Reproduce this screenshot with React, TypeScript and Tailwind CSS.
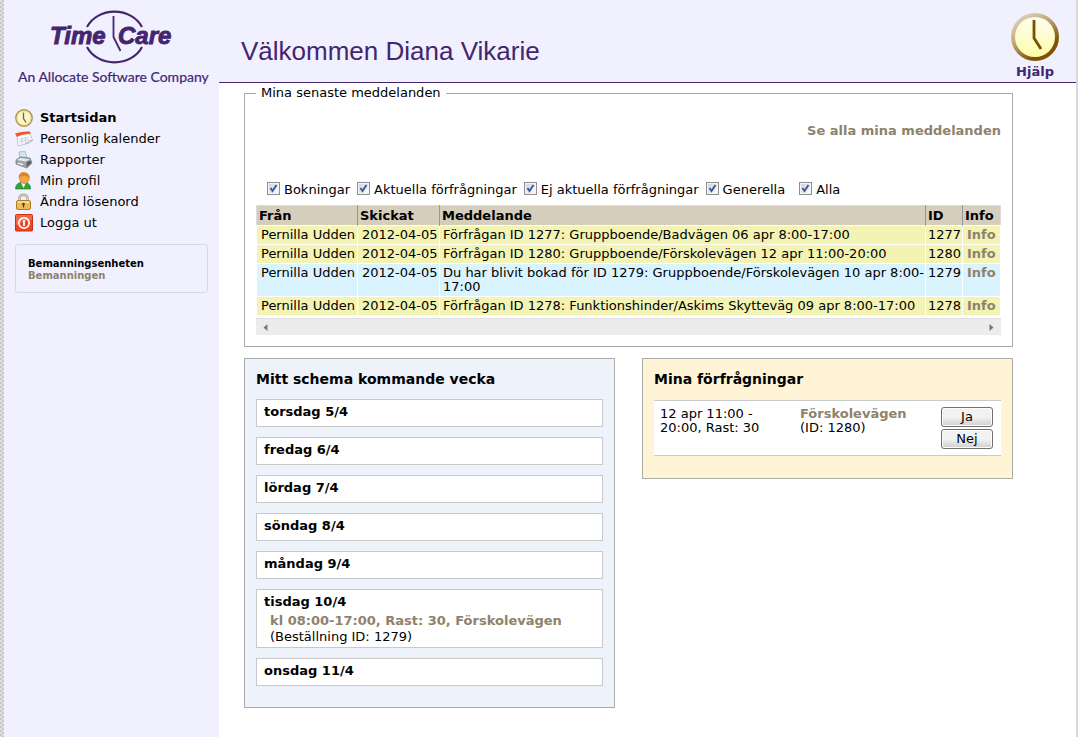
import React from 'react';

const filters = [
  { label: 'Bokningar', space: 'mr-[7px]' },
  { label: 'Aktuella förfrågningar', space: 'mr-[7px]' },
  { label: 'Ej aktuella förfrågningar', space: 'mr-[7px]' },
  { label: 'Generella', space: 'mr-[14px]' },
  { label: 'Alla', space: '' }
];

const messages = [
  { from: 'Pernilla Udden', sent: '2012-04-05', text: 'Förfrågan ID 1277: Gruppboende/Badvägen 06 apr 8:00-17:00', id: 1277, booked: false },
  { from: 'Pernilla Udden', sent: '2012-04-05', text: 'Förfrågan ID 1280: Gruppboende/Förskolevägen 12 apr 11:00-20:00', id: 1280, booked: false },
  { from: 'Pernilla Udden', sent: '2012-04-05', text: 'Du har blivit bokad för ID 1279: Gruppboende/Förskolevägen 10 apr 8:00-17:00', id: 1279, booked: true },
  { from: 'Pernilla Udden', sent: '2012-04-05', text: 'Förfrågan ID 1278: Funktionshinder/Askims Skytteväg 09 apr 8:00-17:00', id: 1278, booked: false }
];

const days = [
  { name: 'torsdag 5/4' },
  { name: 'fredag 6/4' },
  { name: 'lördag 7/4' },
  { name: 'söndag 8/4' },
  { name: 'måndag 9/4' },
  { name: 'tisdag 10/4', shift: 'kl 08:00-17:00, Rast: 30, Förskolevägen', order: '(Beställning ID: 1279)' },
  { name: 'onsdag 11/4' }
];

function Logo() {
  return (
    <svg viewBox="0 0 200 80" className="block h-20 w-[200px]" role="img" aria-label="TimeCare">
      <g fill="none" stroke="#432570">
        <path d="M72 18A30 25.500 0 0 1 127 18" strokeWidth="2.200" />
        <path d="M72 38A30 25.500 0 0 0 127 38" strokeWidth="2.200" />
        <path d="M98.500 7V28L105.500 42" strokeWidth="1.800" />
      </g>
      <g fill="#432570" fontFamily="'Liberation Sans', Arial, sans-serif" fontSize="24" fontWeight="bold" fontStyle="italic" stroke="#432570" strokeWidth="0.900">
        <text x="35" y="35">Time</text>
        <text x="103" y="35">Care</text>
      </g>
      <text x="3" y="73" fill="#432570" stroke="#432570" strokeWidth="0.200" fontFamily="Lato, sans-serif" fontSize="14">An Allocate Software Company</text>
    </svg>
  );
}

function ClockIcon({ className }: { className: string }) {
  return (
    <svg viewBox="0 0 48 48" className={className} aria-hidden="true">
      <defs>
        <linearGradient id="rim" x1="0.100" y1="0" x2="0.800" y2="1">
          <stop offset="0" stopColor="#e6dcc8" />
          <stop offset="0.400" stopColor="#c2a97a" />
          <stop offset="0.800" stopColor="#7d5200" />
        </linearGradient>
        <linearGradient id="face" x1="0" y1="0" x2="0" y2="1">
          <stop offset="0" stopColor="#fffdf0" />
          <stop offset="1" stopColor="#fdfdaa" />
        </linearGradient>
      </defs>
      <circle cx="24" cy="24" r="24" fill="url(#rim)" />
      <circle cx="24" cy="24" r="20" fill="url(#face)" />
      <path d="M23 7V25L30 36" fill="none" stroke="#7a5000" strokeWidth="2.800" />
    </svg>
  );
}

function SmallClockIcon() {
  return (
    <svg viewBox="0 0 18 18" className="size-[18px]" aria-hidden="true">
      <circle cx="9" cy="9" r="8.200" fill="#fdf6cc" stroke="#ab9440" strokeWidth="1.400" />
      <circle cx="9" cy="9" r="6.800" fill="none" stroke="#eee0a0" />
      <path d="M8.500 3.500V9.500L11 13.500" fill="none" stroke="#7b651c" strokeWidth="1.300" />
    </svg>
  );
}

function CalendarIcon() {
  return (
    <svg viewBox="0 0 18 18" className="size-[18px]" aria-hidden="true">
      <path d="M2 5L14.500 3L17.500 10Q13 14 3 16Z" fill="#fbfcff" stroke="#aab2c5" strokeWidth="0.700" />
      <path d="M0 3.500Q7 1 15 1.500L15.500 4Q7 4 2 7Z" fill="#f1592a" />
      <path d="M4 9.500L14 7M4 12L14 9.500M7 8V14M10.500 7V13" stroke="#b9c0d1" strokeWidth="0.700" />
      <path d="M17.500 10Q13 10.500 10.500 14Q15 13.500 17.500 10Z" fill="#d6dbe6" stroke="#8d96aa" strokeWidth="0.500" />
    </svg>
  );
}

function PrinterIcon() {
  return (
    <svg viewBox="0 0 18 18" className="size-[18px]" aria-hidden="true">
      <path d="M4 1L10 0L12 7L5 8Z" fill="#cfe2fa" stroke="#99aabf" strokeWidth="0.700" />
      <path d="M1 9L5 6L15 7L17 12L12 17L1 13Z" fill="#a3a8ae" stroke="#72777d" strokeWidth="0.700" />
      <path d="M2 9L5.500 7L14.500 8L11 10.500Z" fill="#e5e7ea" />
      <path d="M2 11L9 12.500L8.500 15L2 13Z" fill="#f4f5f7" stroke="#777c83" strokeWidth="0.600" />
      <path d="M11.500 11L16 9.500V12.500L11.500 16Z" fill="#5e6268" />
    </svg>
  );
}

function ProfileIcon() {
  return (
    <svg viewBox="0 0 18 18" className="size-[18px]" aria-hidden="true">
      <path d="M0.500 17Q0.500 12 5 10.500H11Q16 12 15.500 17Z" fill="#37a13a" stroke="#1e7a28" strokeWidth="0.600" />
      <path d="M6 10.500L8.500 16L11 10.500Z" fill="#f5fff5" />
      <path d="M4 5Q4 0.500 9 0.500Q14 1 14.500 5.500Q14 11.500 9 11.500Q5 11 4 5Z" fill="#f2a541" stroke="#c8791d" strokeWidth="0.600" />
      <path d="M4 5Q4.500 0.800 9 0.600Q14 1 14.300 5.500Q12 3.500 8 4Z" fill="#d98724" />
    </svg>
  );
}

function LockIcon() {
  return (
    <svg viewBox="0 0 18 18" className="size-[18px]" aria-hidden="true">
      <path d="M4.500 8V5.500Q4.500 2 8.500 2Q12.500 2 12.500 5.500V8" fill="none" stroke="#a59a82" strokeWidth="2.400" />
      <path d="M4.500 8V5.500Q4.500 2 8.500 2Q12.500 2 12.500 5.500V8" fill="none" stroke="#ece7d8" strokeWidth="0.900" />
      <rect x="1.500" y="7.500" width="14" height="9" rx="1.500" fill="#ebbb58" stroke="#ae7a24" />
      <path d="M2.500 9H14.500" stroke="#fae7a9" strokeWidth="1.400" />
      <circle cx="8.500" cy="11" r="1.300" fill="#5c3b0b" />
      <path d="M8.500 11V14.500" stroke="#5c3b0b" strokeWidth="1.300" />
    </svg>
  );
}

function LogoutIcon() {
  return (
    <svg viewBox="0 0 18 18" className="size-[18px]" aria-hidden="true">
      <rect x="0.500" y="0.500" width="17" height="16.500" rx="1" fill="#f0441f" stroke="#cf2f10" />
      <path d="M1 1H17V6Q8 7 1 11Z" fill="#fa8262" opacity="0.600" />
      <circle cx="9" cy="9" r="5.200" fill="none" stroke="#fff" strokeWidth="1.700" />
      <path d="M9 6V12" stroke="#fff" strokeWidth="1.800" />
    </svg>
  );
}

const menu = [
  { label: 'Startsidan', icon: <SmallClockIcon />, active: true },
  { label: 'Personlig kalender', icon: <CalendarIcon /> },
  { label: 'Rapporter', icon: <PrinterIcon /> },
  { label: 'Min profil', icon: <ProfileIcon /> },
  { label: 'Ändra lösenord', icon: <LockIcon /> },
  { label: 'Logga ut', icon: <LogoutIcon /> }
];

function Filter({ label }: { label: string }) {
  return (
    <label className="flex items-center gap-1">
      <span className="mb-[3px] grid size-[13px]">
        <input
          type="checkbox"
          defaultChecked
          className="peer col-start-1 row-start-1 size-[13px] appearance-none border border-[#8e8f8f] bg-linear-to-br from-[#cdd2d8] to-white shadow-[inset_0_0_0_1px_#f4f4f4]"
        />
        <svg viewBox="0 0 13 13" className="pointer-events-none invisible col-start-1 row-start-1 size-[13px] peer-checked:visible" aria-hidden="true">
          <path d="M3.500 6L5.500 9L9.500 3" fill="none" stroke="#42589c" strokeWidth="2" />
        </svg>
      </span>
      {label}
    </label>
  );
}

export default function App() {
  return (
    <div className="flex min-h-screen bg-white font-['Verdana','DejaVu_Sans',sans-serif] text-[13px] leading-[14px] text-black">
      <div className="w-1 shrink-0 bg-[repeating-conic-gradient(#c4c8ca_0_25%,#e4dfda_0_50%)] bg-size-[4px_4px]" />

      {/* Sidebar */}
      <aside className="w-[215px] shrink-0 bg-[#f0f0ff] pt-[9px] pl-[11px]">
        <Logo />
        <nav className="mt-5">
          <ul>
            {menu.map((item) => (
              <li key={item.label} className="h-[21px]">
                <a href="#" className={`flex items-center gap-[7px] ${item.active ? 'font-bold' : ''}`}>
                  {item.icon}
                  {item.label}
                </a>
              </li>
            ))}
          </ul>
        </nav>
        <div className="mt-[9px] mr-[11px] rounded-[3px] border border-[#d3dce6] px-3 pt-[13px] pb-[10px] text-[10px] leading-3 font-bold">
          <p>Bemanningsenheten</p>
          <p className="text-[#8f826c]">Bemanningen</p>
        </div>
      </aside>

      <main className="min-w-0 flex-1">
        {/* Page header */}
        <header className="flex h-[83px] justify-between border-b border-[#432570] bg-[#f0f0ff] pr-[17px] pl-[22px] text-[#432570]">
          <h1 className="pt-9 font-['Liberation_Sans',Arial,sans-serif] text-[26px] leading-[30px]">Välkommen Diana Vikarie</h1>
          <a href="#" className="flex flex-col items-center pt-[13px] font-bold">
            <ClockIcon className="size-12" />
            <span className="mt-1">Hjälp</span>
          </a>
        </header>

        <div className="pr-[63px] pb-[29px] pl-[25px]">
          {/* Messages */}
          <fieldset className="mt-[3px] min-w-0 border border-[#a9aca8] px-[11px] pb-[11px]">
            <legend className="px-[5px]">Mina senaste meddelanden</legend>
            <p className="mt-6 text-right font-bold">
              <a href="#" className="text-[#8f826c]">Se alla mina meddelanden</a>
            </p>
            <div className="mt-11 flex pl-[11px]">
              {filters.map((filter) => (
                <div key={filter.label} className={filter.space}>
                  <Filter label={filter.label} />
                </div>
              ))}
            </div>
            <table className="mt-[7px] w-full table-fixed border-collapse border border-[#dcdcdc]">
              <thead className="bg-[#d5cebc] text-left">
                <tr>
                  <th className="w-[101px] pt-[3px] pr-0 pb-[2px] pl-[2px]">Från</th>
                  <th className="w-[82px] border-l border-[#9a9a9a] pl-[2px]">Skickat</th>
                  <th className="border-l border-[#9a9a9a] pl-[2px]">Meddelande</th>
                  <th className="w-[37px] border-l border-[#9a9a9a] pl-[2px]">ID</th>
                  <th className="w-[38px] border-l border-[#9a9a9a] pl-[2px]">Info</th>
                </tr>
              </thead>
              <tbody>
                {messages.map((message) => (
                  <tr key={message.id} className={`align-top *:border *:border-white *:pt-[2px] *:pb-[2px] ${message.booked ? 'bg-[#d9f3ff]' : 'bg-[#f3f3b4]'}`}>
                    <td className="pl-1 whitespace-nowrap">{message.from}</td>
                    <td className="pl-1 whitespace-nowrap">{message.sent}</td>
                    <td className="pl-[3px]">{message.text}</td>
                    <td className="pl-[2px]">{message.id}</td>
                    <td className="pl-1">
                      <a href="#" className="font-bold text-[#8f826c]">Info</a>
                    </td>
                  </tr>
                ))}
              </tbody>
            </table>
            <div className="mt-[2px] flex h-[17px] items-center justify-between border-t border-[#e0e0e0] bg-[#ececec] px-[7px]">
              <svg viewBox="0 0 5 7" className="h-[7px] w-[5px]" aria-hidden="true">
                <path d="M4.500 0V7L0.500 3.500Z" fill="#777" />
              </svg>
              <svg viewBox="0 0 5 7" className="h-[7px] w-[5px]" aria-hidden="true">
                <path d="M0.500 0V7L4.500 3.500Z" fill="#777" />
              </svg>
            </div>
          </fieldset>

          <div className="mt-[11px] grid grid-cols-2 items-start gap-[27px]">
            {/* Schedule */}
            <section className="border border-[#a9aca8] bg-[#edf2fb] px-[11px] pt-3 pb-[21px]">
              <h2 className="text-sm leading-4 font-bold">Mitt schema kommande vecka</h2>
              <ul className="mt-3 flex flex-col gap-[10px]">
                {days.map((day) => (
                  <li key={day.name} className="min-h-7 border border-[#c9c9c9] bg-white px-[7px] pt-[5px]">
                    <h3 className="font-bold">{day.name}</h3>
                    {day.shift && (
                      <div className="pt-1 pb-[2px] pl-[6px] leading-4">
                        <a href="#" className="font-bold text-[#8f826c]">{day.shift}</a>
                        <p>{day.order}</p>
                      </div>
                    )}
                  </li>
                ))}
              </ul>
            </section>

            {/* Requests */}
            <section className="border border-[#a9aca8] bg-[#fff5d6] px-[11px] pt-3 pb-[22px]">
              <h2 className="text-sm leading-4 font-bold">Mina förfrågningar</h2>
              <div className="mt-[13px] flex border-y border-[#c9c9c9] bg-white py-[6px] pr-2 pl-[6px]">
                <p className="w-[140px] pr-6">12 apr 11:00 - 20:00, Rast: 30</p>
                <div className="flex-1">
                  <a href="#" className="font-bold text-[#8f826c]">Förskolevägen</a>
                  <p>(ID: 1280)</p>
                </div>
                <div className="flex w-[52px] flex-col gap-[2px]">
                  <button type="button" className="h-5 rounded-[3px] border border-[#707070] bg-linear-to-b from-[#f2f2f2] from-50% to-[#cfcfcf] shadow-[inset_0_0_0_1px_#fcfcfc]">Ja</button>
                  <button type="button" className="h-5 rounded-[3px] border border-[#707070] bg-linear-to-b from-[#f2f2f2] from-50% to-[#cfcfcf] shadow-[inset_0_0_0_1px_#fcfcfc]">Nej</button>
                </div>
              </div>
            </section>
          </div>
        </div>
      </main>

      <div className="w-[2px] shrink-0 bg-[repeating-conic-gradient(#c9ced0_0_25%,#e8e2e6_0_50%)] bg-size-[2px_4px]" />
    </div>
  );
}
